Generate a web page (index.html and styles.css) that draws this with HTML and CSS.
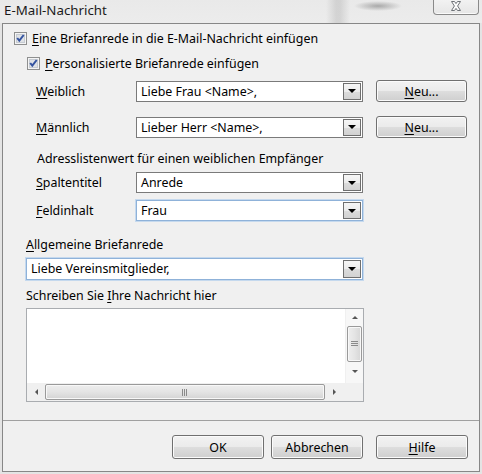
FILE: index.html
```html
<!DOCTYPE html>
<html lang="de">
<head>
<meta charset="utf-8">
<title>E-Mail-Nachricht</title>
<link rel="stylesheet" href="styles.css">
</head>
<body>
<div class="window">
  <div class="titlebar">
    <span class="title">E-Mail-Nachricht</span>
    <span class="close">
      <svg width="12" height="11" viewBox="0 0 12 11"><path d="M1.5 0.5 H4.5 L6 2.6 L7.5 0.5 H10.5 L7.6 5 L10.5 9.5 H7.5 L6 7.4 L4.5 9.5 H1.5 L4.4 5 Z" fill="#fbfbfb" stroke="#6f7378" stroke-width="1" stroke-linejoin="round"/></svg>
    </span>
  </div>
  <div class="dialog">
    <div class="content">
      <div class="check check1">
        <svg class="cb" width="13" height="13" viewBox="0 0 13 13"><rect x="0.5" y="0.5" width="12" height="12" fill="#f4f4f4" stroke="#8e8f8f"/><rect x="2.5" y="2.5" width="8" height="8" fill="#dfe2e6" stroke="#c6cbd2"/><path d="M3.2 6 L5.3 8.7 L9.7 3" fill="none" stroke="#3554a0" stroke-width="2"/></svg>
        <span><u>E</u>ine Briefanrede in die E-Mail-Nachricht einfügen</span>
      </div>
      <div class="check check2">
        <svg class="cb" width="13" height="13" viewBox="0 0 13 13"><rect x="0.5" y="0.5" width="12" height="12" fill="#f4f4f4" stroke="#8e8f8f"/><rect x="2.5" y="2.5" width="8" height="8" fill="#dfe2e6" stroke="#c6cbd2"/><path d="M3.2 6 L5.3 8.7 L9.7 3" fill="none" stroke="#3554a0" stroke-width="2"/></svg>
        <span><u>P</u>ersonalisierte Briefanrede einfügen</span>
      </div>

      <div class="row row-w">
        <span class="label"><u>W</u>eiblich</span>
        <div class="combo"><span class="value">Liebe Frau &lt;Name&gt;,</span><span class="arrow"></span></div>
        <span class="btn neu"><u>N</u>eu...</span>
      </div>
      <div class="row row-m">
        <span class="label"><u>M</u>ännlich</span>
        <div class="combo"><span class="value">Lieber Herr &lt;Name&gt;,</span><span class="arrow"></span></div>
        <span class="btn neu"><u>N</u>eu...</span>
      </div>

      <div class="addr">Adresslistenwert für einen weiblichen Empfänger</div>
      <div class="row row-s">
        <span class="label"><u>S</u>paltentitel</span>
        <div class="combo"><span class="value">Anrede</span><span class="arrow"></span></div>
      </div>
      <div class="row row-f">
        <span class="label"><u>F</u>eldinhalt</span>
        <div class="combo focus"><span class="value">Frau</span><span class="arrow"></span></div>
      </div>

      <div class="section-label allg"><u>A</u>llgemeine Briefanrede</div>
      <div class="combo wide focus"><span class="value">Liebe Vereinsmitglieder,</span><span class="arrow"></span></div>

      <div class="section-label write">Schreiben Sie <u>I</u>hre Nachricht hier</div>
      <div class="textbox">
        <div class="text-area"></div>
        <div class="vscroll">
          <span class="sarrow up"></span>
          <span class="vthumb"><span class="grip-h"></span></span>
          <span class="sarrow down"></span>
        </div>
        <div class="hscroll">
          <span class="sarrow left"></span>
          <span class="hthumb"><span class="grip-v"></span></span>
          <span class="sarrow right"></span>
        </div>
        <div class="corner"></div>
      </div>
    </div>
    <div class="footer">
      <span class="btn ok">OK</span>
      <span class="btn cancel">Abbrechen</span>
      <span class="btn help"><u>H</u>ilfe</span>
    </div>
  </div>
</div>
</body>
</html>
```
FILE: styles.css
```css
* { box-sizing: border-box; }
html, body { margin: 0; padding: 0; }
body {
  width: 482px;
  height: 474px;
  overflow: hidden;
  background: #e4e4e4;
  font-family: "Noto Sans", "Open Sans", "Liberation Sans", sans-serif;
  font-size: 12.4px;
  color: #000;
}
u { text-decoration: underline; text-underline-offset: 2px; text-decoration-thickness: 1px; }

.window { display: flex; flex-direction: column; height: 474px; }

.titlebar {
  height: 23px;
  display: flex;
  align-items: flex-start;
  background:
    radial-gradient(ellipse 24px 5px at 378px 6px, rgba(90,90,90,0.45), rgba(90,90,90,0) 100%),
    linear-gradient(90deg, rgba(0,0,0,0) 326px, rgba(150,150,150,0.28) 336px, rgba(150,150,150,0.28) 340px, rgba(0,0,0,0) 350px),
    linear-gradient(180deg, #e9e9e9, #ececec);
}
.title { margin: 2px 0 0 4px; font-size: 13.3px; line-height: 17px; color: #1a1a1a; }
.close {
  margin-left: auto;
  margin-right: 3px;
  width: 46px;
  height: 15px;
  border: 1px solid #8a8a8a;
  border-top: none;
  border-radius: 0 0 4px 4px;
  background: linear-gradient(180deg, #f2f2f2, #e6e6e6);
  box-shadow: inset 0 -1px 0 #fafafa;
  display: flex;
  justify-content: center;
  align-items: flex-start;
}
.close svg { display: block; margin-top: 1px; }

.dialog {
  margin: 0 2px;
  height: 449px;
  border: 1px solid #878787;
  background: #f0f0f0;
  display: flex;
  flex-direction: column;
}
.content { height: 396px; display: flex; flex-direction: column; align-items: flex-start; }

.check { display: flex; align-items: center; height: 13px; gap: 5px; line-height: 15px; }
.cb { display: block; flex: none; }
.check1 { margin: 8px 0 0 11px; }
.check2 { margin: 12px 0 0 24px; }

.row { display: flex; align-items: center; margin-left: 33px; }
.row .label { width: 100px; line-height: 15px; }
.row-w { margin-top: 10px; height: 22px; }
.row-m { margin-top: 14px; height: 22px; }
.row-s { margin-top: 6px; height: 21px; }
.row-f { margin-top: 7px; height: 21px; }
.addr { margin: 14px 0 0 34px; line-height: 14px; }
.section-label { margin-left: 23px; line-height: 14px; }
.allg { margin-top: 17px; }
.write { margin-top: 9px; }

.combo {
  width: 227px;
  height: 21px;
  border: 1px solid #7a7a7a;
  background: #fff;
  display: flex;
  align-items: stretch;
}
.combo.focus { border-color: #8fb2d9; box-shadow: 0 0 0 1px #c5d9ee; }
.combo .value { flex: 1; padding-left: 4px; line-height: 19px; white-space: nowrap; }
.combo .arrow {
  width: 18px;
  margin: 1px;
  border: 1px solid #6f6f6f;
  background: linear-gradient(180deg, #f6f6f6 0%, #ececec 50%, #dcdcdc 51%, #d2d2d2 100%);
  display: flex;
  align-items: center;
  justify-content: center;
}
.combo .arrow::after {
  content: "";
  border-left: 4px solid transparent;
  border-right: 4px solid transparent;
  border-top: 4px solid #000;
}
.combo.wide { width: 337px; height: 22px; margin: 6px 0 0 23px; }
.combo.wide .value { line-height: 20px; }

.btn {
  display: flex;
  align-items: center;
  justify-content: center;
  border: 1px solid #707070;
  border-radius: 3px;
  background: linear-gradient(180deg, #f2f2f2 0%, #ebebeb 48%, #dddddd 52%, #cfcfcf 100%);
  box-shadow: inset 0 0 0 1px #fbfbfb;
  line-height: 15px;
}
.neu { width: 91px; height: 22px; margin-left: 13px; }

.textbox {
  margin: 5px 0 0 23px;
  width: 338px;
  height: 94px;
  border: 1px solid #a9acb0;
  background: #fff;
  display: grid;
  grid-template-columns: 1fr 18px;
  grid-template-rows: 1fr 18px;
}
.text-area { background: #fff; }
.vscroll {
  background: #f7f7f7;
  border-left: 1px solid #f0f0f0;
  display: flex;
  flex-direction: column;
  align-items: center;
  padding-top: 7px;
}
.hscroll {
  background: #f0f0f0;
  display: flex;
  align-items: center;
  padding-left: 8px;
}
.corner { background: #f0f0f0; }
.sarrow { width: 0; height: 0; display: block; }
.sarrow.up { border-left: 3px solid transparent; border-right: 3px solid transparent; border-bottom: 3px solid #555; }
.sarrow.down { border-left: 3px solid transparent; border-right: 3px solid transparent; border-top: 3px solid #555; margin-top: 8px; }
.sarrow.left { border-top: 3px solid transparent; border-bottom: 3px solid transparent; border-right: 3px solid #555; }
.sarrow.right { border-top: 3px solid transparent; border-bottom: 3px solid transparent; border-left: 3px solid #555; margin-left: 8px; }
.vthumb {
  margin-top: 7px;
  width: 15px;
  height: 36px;
  border: 1px solid #9a9a9a;
  border-radius: 2px;
  background: linear-gradient(90deg, #eeeeee, #e4e4e4 50%, #d6d6d6);
  box-shadow: inset 0 0 0 1px #f8f8f8;
  display: flex;
  align-items: center;
  justify-content: center;
}
.grip-h { width: 7px; height: 6px; background: repeating-linear-gradient(180deg, #8a8a8a 0 1px, transparent 1px 2px); }
.hthumb {
  margin-left: 7px;
  width: 280px;
  height: 16px;
  border: 1px solid #9a9a9a;
  border-radius: 2px;
  background: linear-gradient(180deg, #eeeeee, #e4e4e4 50%, #d4d4d4);
  box-shadow: inset 0 0 0 1px #f8f8f8;
  display: flex;
  align-items: center;
  justify-content: center;
}
.grip-v { width: 6px; height: 7px; background: repeating-linear-gradient(90deg, #8a8a8a 0 1px, transparent 1px 2px); }

.footer {
  flex: 1;
  border-top: 1px solid #a0a0a0;
  display: flex;
  justify-content: flex-end;
  align-items: flex-start;
  padding: 14px 11px 0 0;
}
.footer .btn { height: 24px; width: 92px; }
.ok { margin-right: 7px; }
.cancel { margin-right: 13px; }
```
